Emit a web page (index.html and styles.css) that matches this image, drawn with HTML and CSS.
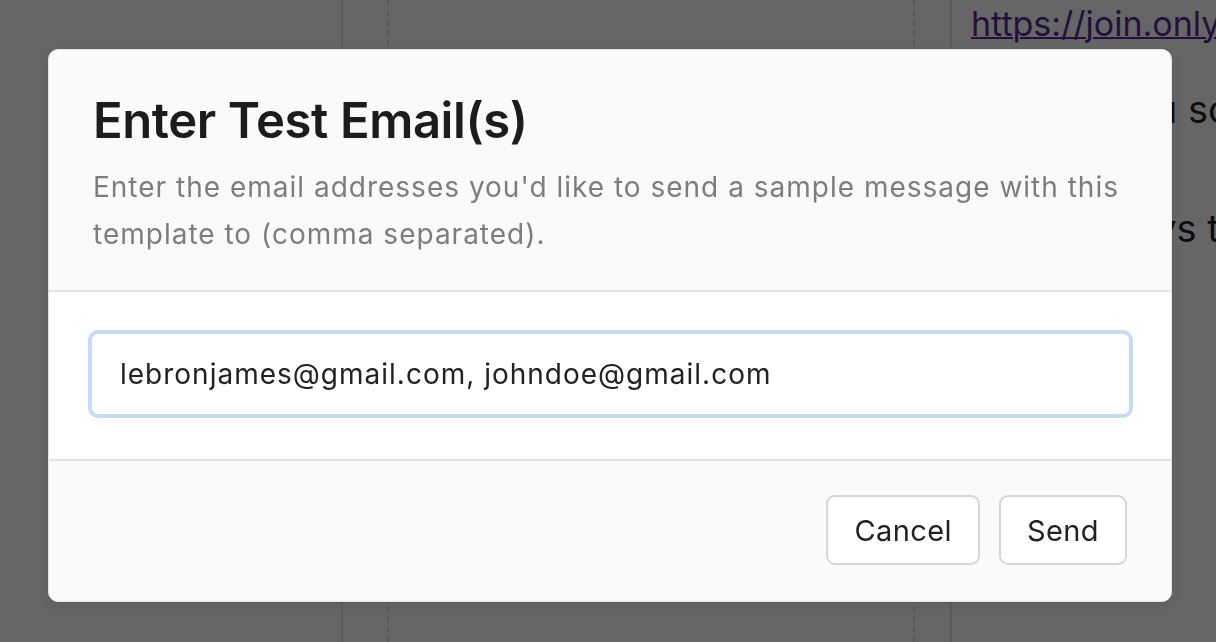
FILE: index.html
```html
<!DOCTYPE html>
<html lang="en">
<head>
<meta charset="utf-8">
<title>Enter Test Email(s)</title>
<link rel="stylesheet" href="styles.css">
</head>
<body>
<div class="page">
  <div class="col-left"></div>
  <div class="col-mid">
    <div class="canvas"></div>
  </div>
  <div class="col-right">
    <a class="bg-link" href="#">https://join.onlyfans.com</a>
    <p class="bg-text line-one">Thank you so much</p>
    <p class="bg-text line-two">Reply always to</p>
  </div>
</div>
<div class="overlay">
  <div class="modal">
    <div class="modal-header">
      <h1 class="modal-title">Enter Test Email(s)</h1>
      <p class="modal-desc">Enter the email addresses you'd like to send a sample message with this template to (comma separated).</p>
    </div>
    <div class="modal-body">
      <input class="email-input" type="text" value="lebronjames@gmail.com, johndoe@gmail.com">
    </div>
    <div class="modal-footer">
      <button class="btn">Cancel</button>
      <button class="btn">Send</button>
    </div>
  </div>
</div>
</body>
</html>
```
FILE: styles.css
```css
* { box-sizing: border-box; }
html, body { margin: 0; height: 100%; }
body {
  font-family: Inter, "Noto Sans", "Liberation Sans", sans-serif;
  background: #666666;
  overflow: hidden;
}
.page {
  display: flex;
  height: 642px;
}
.col-left {
  width: 343px;
  border-right: 2px solid #5c5c5c;
}
.col-mid {
  width: 609px;
  padding: 0 35px 0 44px;
  border-right: 2px solid #5c5c5c;
}
.canvas {
  height: 100%;
  border-left: 2px dashed #595959;
  border-right: 2px dashed #595959;
}
.col-right {
  flex: 1;
  padding-left: 19px;
  white-space: nowrap;
  overflow: hidden;
  color: #0d0d0d;
}
.bg-link {
  display: block;
  margin-top: 2px;
  font-size: 34px;
  line-height: 44px;
  color: #22103d;
  text-decoration: underline;
  text-decoration-thickness: 2px;
}
.bg-text {
  margin: 0;
  font-size: 38px;
  line-height: 46px;
}
.line-one { margin-top: 40px; margin-left: 18px; }
.line-two { margin-top: 73px; margin-left: -9px; }

.overlay {
  position: fixed;
  inset: 0;
  padding: 49px 44px 0 48px;
}
.modal {
  width: 1124px;
  background: #fafafa;
  border: 1px solid #e3e3e3;
  border-radius: 10px;
  box-shadow: 0 4px 14px rgba(0,0,0,0.08);
  overflow: hidden;
}
.modal-header {
  padding: 41px 44px 32px 44px;
  border-bottom: 2px solid #e4e4e4;
}
.modal-title {
  margin: 0;
  font-size: 49px;
  font-weight: 600;
  letter-spacing: -0.4px;
  line-height: 60px;
  color: #1c1c1c;
}
.modal-desc {
  margin: 13px 0 0;
  font-size: 28px;
  letter-spacing: 1px;
  line-height: 47px;
  color: #7d7d7d;
}
.modal-body {
  background: #ffffff;
  padding: 38px 38px 41px 39px;
  border-bottom: 2px solid #e4e4e4;
}
.email-input {
  display: block;
  width: 100%;
  height: 88px;
  border: 4px solid #c6dbf7;
  border-radius: 10px;
  padding: 0 28px;
  font-family: inherit;
  font-size: 28px;
  letter-spacing: 1px;
  color: #222;
  background: #fff;
  outline: none;
}
.modal-footer {
  display: flex;
  justify-content: flex-end;
  gap: 19px;
  padding: 34px 44px 36px;
}
.btn {
  height: 70px;
  padding: 0 26px;
  background: #fff;
  border: 2px solid #d6d6da;
  border-radius: 9px;
  font-family: inherit;
  font-size: 29px;
  letter-spacing: 0.4px;
  color: #222;
}
```
